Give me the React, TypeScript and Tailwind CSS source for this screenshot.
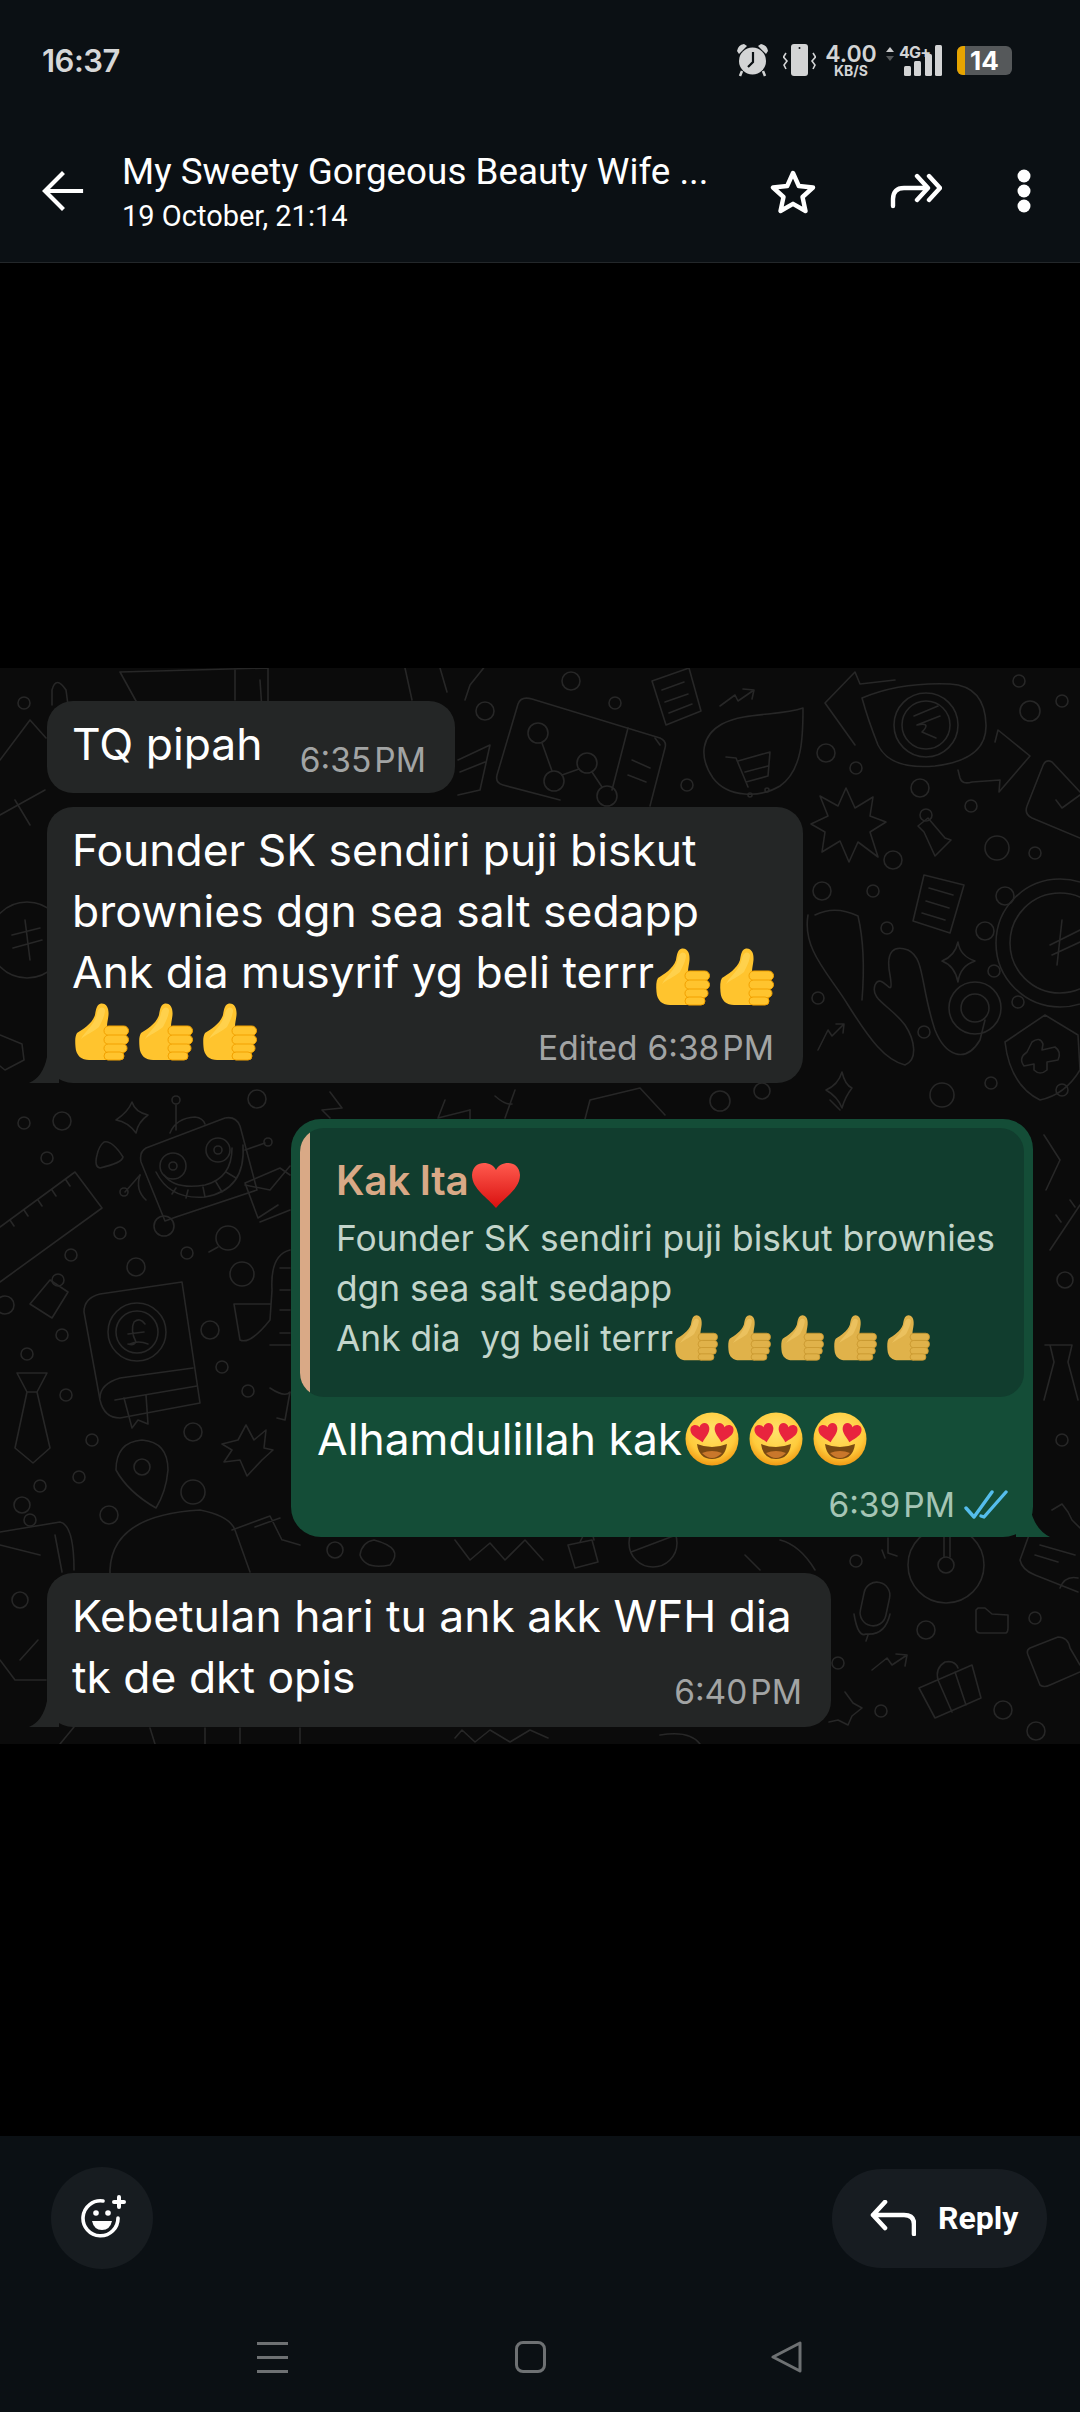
import React from "react";

const dots: [number, number, number][] = [
  [485,711,9],[615,703,6],[571,681,9],[826,753,9],[856,768,6],[687,785,6],[920,788,9],[971,806,6],[997,848,12],[1035,853,6],[893,860,9],[822,891,9],[873,891,6],[1005,896,9],[887,928,6],[985,931,9],[994,971,6],[818,998,6],[1018,1002,6],[924,1032,6],[991,1083,6],[942,1095,12],[720,1101,10],[762,1091,8],[1030,711,10],[1062,701,6],[1019,681,6],
  [24,1123,6],[62,1121,9],[47,1158,6],[257,1099,9],[120,1233,6],[71,1255,6],[136,1267,9],[187,1253,6],[242,1274,12],[210,1330,9],[62,1335,6],[27,1354,6],[222,1367,6],[248,1391,6],[66,1395,6],[193,1432,9],[92,1440,6],[79,1477,6],[40,1486,6],[193,1492,12],[109,1515,9],[5,1305,9],
  [856,1561,6],[926,1630,9],[1035,1618,6],[838,1663,6],[881,1711,6],[1003,1710,9],[1036,1731,9],[24,703,6],[335,1550,8],[1062,1090,6],[1065,1280,8],[1062,1440,6],[20,1600,8],
];

function Doodles() {
  return (
    <svg className="absolute inset-0 w-full h-full" viewBox="0 668 1080 1076" fill="none" stroke="#272727" strokeWidth="1.6" strokeLinecap="round" strokeLinejoin="round">
      {dots.map(([x, y, r], i) => <circle key={i} cx={x} cy={y} r={r} />)}
      {/* chart card */}
      <path d="M532 699 L660 738 Q667 741 665 748 L650 806 M497 775 L518 704 Q521 696 532 699 M497 775 Q495 783 503 785 L560 800" />
      <path d="M628 728 L612 790 M632 760 L650 768 M628 775 L646 782 M655 738 L660 745" />
      <circle cx="538" cy="733" r="10" /><circle cx="587" cy="763" r="10" /><circle cx="554" cy="781" r="10" /><circle cx="607" cy="796" r="10" />
      <path d="M542 743 L552 771 M562 775 L579 769 M592 772 L602 787" />
      {/* receipts */}
      <path d="M652 681 L689 668 L701 711 L666 725 Z M662 690 L684 682 M665 702 L688 694 M669 713 L692 704" />
      <path d="M924 875 L964 885 L950 933 L913 921 Z M929 888 L953 895 M926 901 L949 908 M922 913 L945 920" />
      {/* trends */}
      <path d="M720 706 L735 695 L738 701 L754 690 M743 689 L754 690 L752 699" />
      <path d="M818 1050 L828 1030 L832 1036 L844 1024 M836 1024 L844 1024 L843 1033" />
      <path d="M872 1670 L887 1658 L892 1665 L907 1655 M896 1654 L907 1655 L905 1666" />
      {/* cart bubble */}
      <path d="M803 708 C803 735 803 770 780 786 C760 798 728 798 713 778 C698 756 702 735 722 724 C745 712 780 716 803 708 Z" />
      <path d="M726 757 L736 758 L748 787 M738 761 L770 752 L768 776 L746 782 M745 772 L768 766" /><circle cx="750" cy="795" r="2" /><circle cx="767" cy="790" r="2" />
      {/* rupee notes */}
      <path d="M862 698 Q900 682 950 684 Q985 686 986 725 Q987 760 935 766 Q890 770 878 745 Q868 720 862 698 Z" />
      <circle cx="926" cy="725" r="32" /><circle cx="926" cy="725" r="24" /><path d="M914 716 L938 706 M917 725 L940 716 M917 725 Q932 722 922 732 L936 738" />
      <path d="M855 745 L825 703 L855 672 M855 672 L860 684 L895 680" />
      <path d="M958 770 L960 778 Q962 785 972 782 L1000 780 L999 792 L1030 756 L998 730 L995 742" />
      {/* check card */}
      <path d="M1080 792 L1052 762 Q1045 758 1042 768 L1027 806 Q1024 814 1032 818 L1080 838 M1056 800 L1062 808 L1080 795" />
      {/* burst */}
      <path d="M846 788 L855 808 L873 797 L870 816 L886 822 L870 832 L878 857 L858 842 L849 862 L840 841 L822 852 L825 832 L811 824 L828 816 L820 796 L838 806 Z" />
      {/* core */}
      <path d="M928 818 L945 838 L951 840 L935 856 L924 832 L918 826 Z" /><circle cx="926" cy="815" r="6" />
      {/* yen coin */}
      <circle cx="1060" cy="943" r="64" /><circle cx="1060" cy="943" r="50" /><path d="M1062 920 L1057 965 M1050 945 L1080 930 M1052 955 L1080 942" />
      {/* stethoscope */}
      <path d="M808 915 C802 950 830 975 848 1005 C870 1040 885 1060 905 1065 C918 1060 915 1040 905 1025 C890 1005 870 1000 875 985 C882 970 895 1005 890 975 C885 950 895 945 908 950 C925 958 920 985 935 1030 C945 1055 965 1065 980 1040 L985 1020" />
      <path d="M815 915 Q835 905 858 916 Q866 950 862 1000" />
      <circle cx="975" cy="1008" r="26" /><circle cx="975" cy="1008" r="14" />
      {/* sparkles */}
      <path d="M958 942 Q960 956 975 961 Q960 966 958 982 Q955 966 942 961 Q955 956 958 942 Z" />
      <path d="M842 1072 Q845 1085 852 1088 Q845 1097 842 1108 Q838 1097 826 1090 Q838 1085 842 1072 Z" />
      <path d="M132 1102 Q135 1112 148 1115 Q138 1122 136 1133 Q128 1122 116 1120 Q128 1112 132 1102 Z" />
      <path d="M515 1090 L505 1118 M495 1096 Q505 1105 512 1104" />
      {/* shield */}
      <path d="M1005 1042 L1045 1015 L1078 1035 L1080 1070 Q1065 1095 1040 1100 Q1010 1085 1005 1042 Z" />
      <path d="M1027 1052 L1032 1042 Q1040 1036 1043 1044 L1042 1050 L1055 1047 Q1062 1052 1058 1060 L1047 1062 L1047 1070 Q1040 1076 1034 1070 L1034 1064 L1024 1066 Q1018 1058 1027 1052 Z" />
      {/* ruler */}
      <path d="M0 1227 L75 1172 L102 1208 L0 1282 M10 1220 L14 1226 M24 1210 L28 1216 M38 1200 L42 1206 M52 1190 L56 1196 M66 1180 L70 1186" />
      {/* triangle */}
      <path d="M104 1142 Q112 1140 123 1157 Q122 1163 100 1168 Q94 1167 97 1155 Q99 1146 104 1142 Z" />
      {/* robot */}
      <path d="M146 1148 L225 1118 Q236 1116 240 1126 L257 1190 L176 1217 L165 1221 L141 1162 Q139 1152 146 1148 Z" />
      <circle cx="173" cy="1166" r="13" /><circle cx="173" cy="1166" r="4" /><circle cx="218" cy="1150" r="12" /><circle cx="218" cy="1150" r="4" />
      <path d="M156 1172 Q170 1200 205 1197 Q246 1190 243 1145 M164 1175 Q175 1190 205 1185 Q232 1178 232 1148 M176 1188 L172 1194 M188 1190 L186 1198 M203 1187 L205 1197 M216 1182 L222 1192 M226 1172 L236 1178" />
      <path d="M170 1133 Q176 1118 195 1117 Q203 1118 205 1124 M176 1130 L176 1105 M245 1150 L265 1143 M140 1175 L125 1192" />
      <circle cx="176" cy="1100" r="4" /><circle cx="268" cy="1142" r="4" /><circle cx="124" cy="1192" r="4" /><circle cx="164" cy="1226" r="10" />
      <path d="M245 1183 L280 1168 M245 1183 L258 1218 L278 1205 M280 1168 L290 1175" />
      <path d="M140 1175 Q135 1190 146 1200" />
      <circle cx="228" cy="1238" r="12" /><path d="M218 1247 L209 1252" />
      {/* £ book */}
      <path d="M182 1282 L100 1294 Q84 1298 84 1312 L100 1400 Q104 1418 120 1418 L200 1403 L182 1282 Z" />
      <path d="M193 1368 L120 1378 Q100 1384 100 1398 M197 1386 L115 1400" />
      <path d="M124 1398 L132 1428 L138 1420 L148 1424 L146 1395" />
      <circle cx="137" cy="1332" r="29" /><circle cx="137" cy="1332" r="21" /><path d="M145 1324 Q140 1317 134 1322 Q130 1330 136 1342 Q134 1346 128 1344 M128 1334 L144 1332 M130 1344 Q138 1340 148 1344" />
      {/* tie */}
      <path d="M17 1373 L47 1373 L37 1392 L50 1448 L33 1463 L15 1448 L27 1392 Z M27 1392 L37 1392" />
      {/* core left */}
      <path d="M50 1280 L68 1292 L52 1318 L30 1304 Z" /><circle cx="58" cy="1280" r="6" />
      {/* shape right of book */}
      <path d="M290 1250 Q270 1255 272 1290 L270 1320 Q250 1345 240 1340 L234 1304 M234 1304 L270 1304 M270 1345 L290 1345 M280 1268 L290 1268 M280 1290 L290 1290 M280 1310 L290 1310 M280 1333 L290 1333" />
      {/* location pin */}
      <path d="M142 1440 Q168 1442 168 1470 Q166 1492 156 1508 Q128 1492 116 1470 Q116 1442 142 1440 Z" /><circle cx="142" cy="1467" r="8" />
      {/* star left */}
      <path d="M246 1425 L254 1440 L266 1430 L264 1448 L273 1450 L262 1460 L247 1476 L240 1460 L224 1462 L232 1450 L222 1444 L238 1440 Z" />
      <path d="M270 1388 Q285 1398 290 1392 L285 1420 L277 1418" />
      {/* star near robot */}
      <path d="M245 1185 L270 1190 L290 1166 M290 1210 L270 1218 L260 1222" />
      {/* bag & tape bottom left */}
      <path d="M110 1575 L110 1570 Q112 1515 200 1510 Q230 1516 235 1530 L250 1572 M232 1530 L270 1516 L282 1540 M255 1527 L280 1518 M283 1540 L300 1545" />
      <path d="M0 1532 L60 1522 Q74 1525 74 1570 M0 1545 L40 1555 M55 1535 L62 1572" /><circle cx="22" cy="1505" r="8" /><circle cx="30" cy="1520" r="6" />
      {/* mid bottom */}
      <path d="M374 1540 Q405 1548 390 1565 Q365 1570 360 1555 Q362 1542 374 1540 Z" />
      <path d="M455 1540 L470 1560 L490 1543 L505 1560 L525 1540 L543 1560" />
      <path d="M568 1545 L592 1540 L598 1562 L575 1568 Z M580 1542 L584 1534 L592 1532 L594 1540" />
      <circle cx="653" cy="1543" r="24" /><path d="M631 1552 L676 1535" />
      <path d="M780 1540 Q800 1545 815 1570 M745 1555 L760 1570" />
      <path d="M455 1738 L462 1730 L475 1742 L490 1730 L510 1742 L530 1730 L548 1738" />
      <path d="M60 1744 L74 1727 M150 1728 L155 1744 M205 1728 L205 1744 M240 1728 L240 1744 M300 1728 L300 1744 M660 1735 Q690 1730 700 1744" />
      {/* timer */}
      <circle cx="946" cy="1565" r="38" /><circle cx="946" cy="1565" r="8" /><path d="M944 1537 L944 1557 M950 1537 L950 1557" />
      <path d="M888 1538 L888 1553 L897 1556 M882 1550 L885 1558" />
      {/* mic */}
      <rect x="862" y="1582" width="26" height="44" rx="13" transform="rotate(12 875 1604)" />
      <path d="M854 1614 Q858 1638 866 1634 Q885 1636 890 1614 M868 1635 L866 1641" />
      {/* folder */}
      <path d="M976 1610 L976 1630 Q977 1633 980 1633 L1006 1633 Q1008 1632 1008 1628 L1008 1615 L992 1614 L985 1608 L978 1608 Z" />
      {/* briefcase */}
      <path d="M919 1688 L972 1665 L981 1698 L935 1718 Z M938 1680 Q935 1668 945 1662 Q955 1660 958 1668 M938 1680 L952 1712 M955 1672 L966 1705" />
      {/* card right */}
      <path d="M1030 1648 L1058 1637 Q1068 1637 1070 1648 L1080 1665 M1028 1655 L1040 1685 Q1044 1688 1050 1685 L1080 1672 M1028 1655 Q1026 1650 1030 1648" />
      {/* note */}
      <path d="M1029 1535 L1020 1560 Q1022 1570 1035 1575 L1078 1592 M1040 1545 L1075 1555 M1035 1555 L1058 1562 M1060 1588 Q1065 1575 1078 1578" />
      {/* pin */}
      <path d="M1052 1510 L1062 1504 L1068 1512 L1072 1520 L1080 1528" />
      <path d="M845 1692 L853 1703 L862 1708 L852 1716 L848 1725 L838 1720 L829 1722" />
      {/* right edge */}
      <path d="M1044 1135 L1060 1160 L1046 1190 M1050 1250 L1080 1205 M1056 1215 L1061 1222 M1070 1200 L1075 1207" />
      <path d="M1045 1345 L1072 1345 L1068 1362 L1078 1400 M1050 1345 L1054 1362 L1044 1400" />
      {/* top left */}
      <path d="M52 705 L52 690 Q56 675 66 690 L68 705 M120 672 L152 730 M120 672 L268 668 M268 668 L268 705" />
      <path d="M260 680 L262 710 M235 700 L235 670" /><path d="M405 668 L412 700 M440 668 L447 692" />
      <path d="M0 760 L30 720 L46 738 M0 815 L45 790 M15 800 L30 825" />
      <circle cx="27" cy="940" r="38" /><path d="M25 920 L30 960 M12 935 L40 928 M13 948 L42 940" />
      <path d="M0 1035 L22 1044 L24 1060 L5 1070 L0 1066" />
      <path d="M465 700 L470 685 L490 660" /><path d="M458 760 L490 745 L480 790 L458 795 M460 772 L485 762" />
      <path d="M330 1092 L342 1108 L322 1110 L330 1118 M445 1100 L438 1118 L470 1110 M585 1119 L590 1100 L640 1088 L665 1115 M830 1100 L840 1110" />
      <path d="M470 1110 L470 1119" />
      <path d="M20 1660 L38 1640 M0 1660 L15 1680 L46 1680" />
    </svg>
  );
}

function Thumb({ w = 54, h = 58, dim = false }: { w?: number; h?: number; dim?: boolean }) {
  const a = dim ? "#E0B24A" : "#FFC42E";
  const b = dim ? "#C9982F" : "#F2A100";
  const c = dim ? "#F0C766" : "#FFD75A";
  return (
    <svg width={w} height={h} viewBox="0 0 54 58" className="inline-block shrink-0">
      <path d="M2 30 C8 26 17 21 20 12 C21 6 22 1 26 0.5 C32 0 34 6 33.5 12 C33 17 32 20 32 24 L38 40 L34 57 L14 57 C7 57 1 53 0.5 44 C0 38 0 33 2 30Z" fill={a} />
      <path d="M22 10 C24 4 28 3 30 7 C30 12 27 18 24 24 C18 29 10 32 6 36 C10 28 20 22 22 10Z" fill={c} opacity="0.7" />
      <rect x="29" y="23" width="24.5" height="9.5" rx="4.7" fill={a} stroke={b} strokeWidth="1" />
      <rect x="29" y="32" width="24.5" height="9.5" rx="4.7" fill={a} stroke={b} strokeWidth="1" />
      <rect x="29" y="41" width="23" height="8.5" rx="4.2" fill={a} stroke={b} strokeWidth="1" />
      <rect x="29" y="49" width="20" height="8" rx="4" fill={a} stroke={b} strokeWidth="1" />
    </svg>
  );
}

function HeartEyes() {
  const heart = "M0 -5 C2 -10 10 -10 10 -3 C10 3 3 7 0 11 C-3 7 -10 3 -10 -3 C-10 -10 -2 -10 0 -5Z";
  return (
    <svg width="54" height="54" viewBox="0 0 54 54" className="inline-block shrink-0">
      <defs>
        <radialGradient id="fc" cx="50%" cy="35%" r="65%">
          <stop offset="0%" stopColor="#FFE26A" />
          <stop offset="70%" stopColor="#FFCB3C" />
          <stop offset="100%" stopColor="#F09A14" />
        </radialGradient>
      </defs>
      <circle cx="27" cy="27" r="26.5" fill="url(#fc)" />
      <path d="M12 32 Q27 38 42 32 Q40 47 27 47 Q14 47 12 32Z" fill="#7A4A12" />
      <path d="M17 41 Q27 37 37 41 Q32 46 27 46 Q22 46 17 41Z" fill="#C9772B" />
      <path d={heart} transform="translate(15.5 20) rotate(-12) scale(0.95)" fill="#E8243E" />
      <path d={heart} transform="translate(38.5 20) rotate(12) scale(0.95)" fill="#E8243E" />
    </svg>
  );
}

function Heart() {
  return (
    <svg width="50" height="48" viewBox="0 0 50 48" className="inline-block shrink-0 ml-[3px]">
      <defs>
        <linearGradient id="hg" x1="0" y1="0" x2="0" y2="1">
          <stop offset="0%" stopColor="#FF5A4E" />
          <stop offset="100%" stopColor="#D9100F" />
        </linearGradient>
      </defs>
      <path d="M25 9 C29 0 48 -2 49 14 C49 28 33 37 25 47 C17 37 1 28 1 14 C2 -2 21 0 25 9Z" fill="url(#hg)" />
    </svg>
  );
}

function LeftTail() {
  return (
    <svg className="absolute left-[-18px] bottom-0" width="30" height="26" viewBox="0 0 30 26">
      <path d="M30 0 L30 26 L0 26 Q14 20 18 0Z" fill="#242626" />
    </svg>
  );
}

function Time({ t, green = false, pre = "" }: { t: string; green?: boolean; pre?: string }) {
  return (
    <span className={`text-[33.5px] leading-[38px] whitespace-nowrap ${green ? "text-[#a5c5b5]" : "text-[#a2a4a4]"}`}>
      {pre && <span className="mr-[10px]">{pre}</span>}
      {t}
      <span className="ml-[3px]">PM</span>
    </span>
  );
}

export default function App() {
  return (
    <div className="w-[1080px] h-[2412px] flex flex-col bg-black overflow-hidden font-['Roboto',sans-serif] text-white">
      {/* top bars */}
      <header className="h-[263px] bg-[#0b1014] border-b border-[#23272a] flex flex-col shrink-0">
        <div className="h-[122px] pl-[42px] pr-[68px] flex items-start justify-between pt-[43px]">
          <span className="text-[31px] leading-[36px] font-semibold text-[#d6d7d8] font-['Inter',sans-serif] tracking-[-0.5px]">16:37</span>
          <div className="flex items-center h-[34px] text-[#d3d4d5]">
            <svg width="33" height="34" viewBox="0 0 33 34">
              <path d="M1 8 Q2 2 8 1 L11 3 L3 11Z M32 8 Q31 2 25 1 L22 3 L30 11Z" fill="#d3d4d5" />
              <circle cx="16.5" cy="18" r="13.5" fill="#d3d4d5" />
              <path d="M6 28 L4 33 M27 28 L29 33" stroke="#d3d4d5" strokeWidth="2.5" />
              <path d="M17 9 L17 19 L12 24" stroke="#0b1014" strokeWidth="2.2" fill="none" />
            </svg>
            <svg width="33" height="32" viewBox="0 0 33 32" className="ml-[14px]">
              <rect x="8" y="0" width="17" height="32" rx="3" fill="#d3d4d5" />
              <circle cx="16.5" cy="4" r="1" fill="#0b1014" />
              <path d="M3 9 L0.5 13 L4 17 L1 21 L3 25 M30 9 L32.5 13 L29 17 L32 21 L30 25" stroke="#d3d4d5" strokeWidth="1.6" fill="none" />
            </svg>
            <div className="ml-[9px] w-[52px] flex flex-col items-center font-['Inter',sans-serif] font-semibold">
              <span className="text-[23px] leading-[20px]">4.00</span>
              <span className="text-[14px] leading-[13px] font-bold">KB/S</span>
            </div>
            <svg width="8" height="14" viewBox="0 0 8 14" className="ml-[9px] mb-[12px]">
              <path d="M4 0 L8 5 L0 5Z" fill="#c9cacb" /><path d="M4 14 L8 9 L0 9Z" fill="#55585a" />
            </svg>
            <div className="relative ml-[10px] w-[38px] h-[31px]">
              <svg width="38" height="31" viewBox="0 0 38 31" className="block">
                <rect x="0" y="21" width="7" height="10" rx="1.5" fill="#d3d4d5" />
                <rect x="10" y="16" width="7" height="15" rx="1.5" fill="#d3d4d5" />
                <rect x="21" y="9" width="7" height="22" rx="1.5" fill="#d3d4d5" />
                <rect x="31" y="0" width="7" height="31" rx="1.5" fill="#d3d4d5" />
              </svg>
              <span className="absolute left-[-5px] top-[-1px] text-[16px] leading-[16px] font-bold font-['Inter',sans-serif] tracking-[-0.8px] whitespace-nowrap">4G+</span>
            </div>
            <div className="relative ml-[15px] w-[55px] h-[29px] rounded-[6px] bg-[#55585a] overflow-hidden flex items-center">
              <div className="w-[8px] h-full bg-[#e6a400] shrink-0" />
              <span className="ml-[5px] text-[26px] leading-[29px] font-bold text-white font-['Inter',sans-serif]">14</span>
            </div>
          </div>
        </div>
        <div className="flex items-start pl-[42px] h-[140px]">
          <svg width="42" height="40" viewBox="0 0 42 40" className="mt-[49px] shrink-0" fill="none" stroke="white" strokeWidth="4.2" strokeLinecap="square">
            <path d="M39 20 L4 20 M20 3 L3 20 L20 37" />
          </svg>
          <div className="ml-[38px] w-[640px] flex flex-col">
            <span className="text-[36.8px] leading-[44px] mt-[28px] whitespace-nowrap">My Sweety Gorgeous Beauty Wife ...</span>
            <span className="text-[29px] leading-[34px] mt-[5px] whitespace-nowrap">19 October, 21:14</span>
          </div>
          <svg width="46" height="44" viewBox="0 0 46 44" className="ml-[8px] mt-[48px] shrink-0" fill="none" stroke="white" strokeWidth="4.4" strokeLinejoin="round">
            <path d="M23 3 L28.8 16 L43 17.5 L32.5 27 L35.5 41 L23 33.8 L10.5 41 L13.5 27 L3 17.5 L17.2 16Z" />
          </svg>
          <svg width="52" height="36" viewBox="0 0 52 36" className="ml-[74px] mt-[51px] shrink-0" fill="none" stroke="white" strokeWidth="4.4" strokeLinecap="round" strokeLinejoin="round">
            <path d="M3 33 L3 26 Q3 15 14 15 L36 15 M27 3 L38 15 L27 27 M39 3 L50 15 L39 27" />
          </svg>
          <svg width="14" height="44" viewBox="0 0 14 44" className="ml-[75px] mt-[47px] shrink-0" fill="white">
            <circle cx="7" cy="7" r="6.5" /><circle cx="7" cy="22" r="6.5" /><circle cx="7" cy="37" r="6.5" />
          </svg>
        </div>
      </header>

      {/* chat */}
      <section className="relative mt-[405px] h-[1076px] shrink-0 bg-[#0b0b0b] pt-[33px] overflow-hidden">
        <Doodles />
        <div className="relative flex flex-col text-[44.4px] leading-[61px] font-['Inter',sans-serif]">
          <div className="ml-[47px] w-[408px] h-[92px] rounded-[26px] bg-[#242626] pl-[25px] pr-[29px] flex items-start justify-between">
            <span className="mt-[13px]">TQ pipah</span>
            <span className="mt-[25px]"><Time t="6:35" /></span>
          </div>

          <div className="relative ml-[47px] mt-[14px] w-[756px] h-[276px] rounded-[26px] bg-[#242626] pl-[25px] pr-[29px] pt-[13px]">
            <LeftTail />
            <div className="whitespace-nowrap">Founder SK sendiri puji biskut</div>
            <div className="whitespace-nowrap">brownies dgn sea salt sedapp</div>
            <div className="whitespace-nowrap flex items-end h-[61px]">
              <span>Ank dia musyrif yg beli terrr</span>
              <span className="flex gap-[10px] ml-[2px] mb-[-3px]"><Thumb /><Thumb /></span>
            </div>
            <div className="flex items-end justify-between">
              <span className="flex gap-[10px] ml-[3px]"><Thumb /><Thumb /><Thumb /></span>
              <span className="mb-[-14px]"><Time t="6:38" pre="Edited" /></span>
            </div>
          </div>

          <div className="relative ml-[291px] mt-[36px] w-[742px] h-[418px] rounded-[30px] bg-[#144d37] pt-[9px] pl-[9px] pr-[9px]">
            <svg className="absolute right-[-17px] bottom-0" width="34" height="30" viewBox="0 0 34 30">
              <path d="M0 0 L14 0 Q18 22 34 30 L0 30Z" fill="#144d37" />
            </svg>
            <div className="h-[269px] rounded-[24px] bg-[#113d2e] overflow-hidden flex">
              <div className="w-[10px] bg-[#d9a986] shrink-0" />
              <div className="pl-[26px] pt-[27px] flex flex-col">
                <div className="flex items-center h-[52px]">
                  <span className="text-[40.5px] leading-[48px] font-semibold text-[#d9a986] whitespace-nowrap tracking-[-0.3px]">Kak Ita</span>
                  <span className="mt-[2px]"><Heart /></span>
                </div>
                <div className="text-[35.3px] leading-[50px] text-[#c3d5cb] mt-[7px]">
                  <div className="whitespace-nowrap">Founder SK sendiri puji biskut brownies</div>
                  <div className="whitespace-nowrap">dgn sea salt sedapp</div>
                  <div className="whitespace-pre flex items-center h-[50px]">
                    <span>Ank dia  yg beli terrr</span>
                    <span className="flex gap-[10px] ml-[2px] mt-[-2px]"><Thumb w={43} h={46} dim /><Thumb w={43} h={46} dim /><Thumb w={43} h={46} dim /><Thumb w={43} h={46} dim /><Thumb w={43} h={46} dim /></span>
                  </div>
                </div>
              </div>
            </div>
            <div className="flex items-center h-[61px] pl-[17px] mt-[12px]">
              <span className="whitespace-nowrap">Alhamdulillah kak</span>
              <span className="flex gap-[10px] ml-[3px] mt-[-2px]"><HeartEyes /><HeartEyes /><HeartEyes /></span>
            </div>
            <div className="flex items-center justify-end pr-[16px] mt-[16px]">
              <Time t="6:39" green />
              <svg width="44" height="30" viewBox="0 0 44 30" className="ml-[9px]" fill="none" stroke="#55bdec" strokeWidth="3.4" strokeLinecap="round" strokeLinejoin="round">
                <path d="M2 18 L10 27 L28 2 M17 26 L20 27 L42 2" />
              </svg>
            </div>
          </div>

          <div className="relative ml-[47px] mt-[36px] w-[784px] h-[154px] rounded-[26px] bg-[#242626] pl-[25px] pr-[29px] pt-[13px]">
            <LeftTail />
            <div className="whitespace-nowrap">Kebetulan hari tu ank akk WFH dia</div>
            <div className="flex items-end justify-between">
              <span className="whitespace-nowrap">tk de dkt opis</span>
              <span className="mb-[-11px]"><Time t="6:40" /></span>
            </div>
          </div>
        </div>
      </section>

      {/* bottom */}
      <footer className="mt-[392px] flex-1 bg-[#0b1014] flex flex-col">
        <div className="pl-[51px] pr-[33px] pt-[31px] flex justify-between items-center">
          <div className="w-[102px] h-[102px] rounded-full bg-[#171c20] flex items-center justify-center">
            <svg width="46" height="46" viewBox="0 0 46 46" fill="none" stroke="white" strokeWidth="3.6" strokeLinecap="round" className="ml-[4px] mt-[-3px]">
              <path d="M37 24 A17.5 17.5 0 1 1 22 7" />
              <path d="M11 27 L31 27 Q29 36 21 36 Q13 36 11 27Z" fill="white" stroke="none" />
              <circle cx="15" cy="19" r="2.8" fill="white" stroke="none" /><circle cx="27" cy="19" r="2.8" fill="white" stroke="none" />
              <path d="M38 3 L38 13 M33 8 L43 8" strokeWidth="4" />
            </svg>
          </div>
          <div className="w-[215px] h-[99px] rounded-[50px] bg-[#171c21] flex items-center pl-[38px]">
            <svg width="46" height="36" viewBox="0 0 46 36" fill="none" stroke="white" strokeWidth="4.6" strokeLinecap="round" strokeLinejoin="round">
              <path d="M44 34 L44 24 Q44 15 34 15 L3 15 M15 2 L3 15 L15 28" />
            </svg>
            <span className="ml-[22px] text-[32px] leading-[40px] font-bold">Reply</span>
          </div>
        </div>
        <div className="mt-[72px] pl-[257px] flex items-center">
          <div className="w-[31px] h-[31px] flex flex-col justify-between">
            <div className="h-[3px] bg-[#6e7173]" /><div className="h-[3px] bg-[#6e7173]" /><div className="h-[3px] bg-[#6e7173]" />
          </div>
          <div className="ml-[227px] w-[31px] h-[32px] rounded-[8px] border-[3px] border-[#6e7173]" />
          <svg width="31" height="32" viewBox="0 0 31 32" className="ml-[225px]" fill="none" stroke="#6e7173" strokeWidth="3" strokeLinejoin="round">
            <path d="M29 2 L29 30 L2 16Z" />
          </svg>
        </div>
      </footer>
    </div>
  );
}
